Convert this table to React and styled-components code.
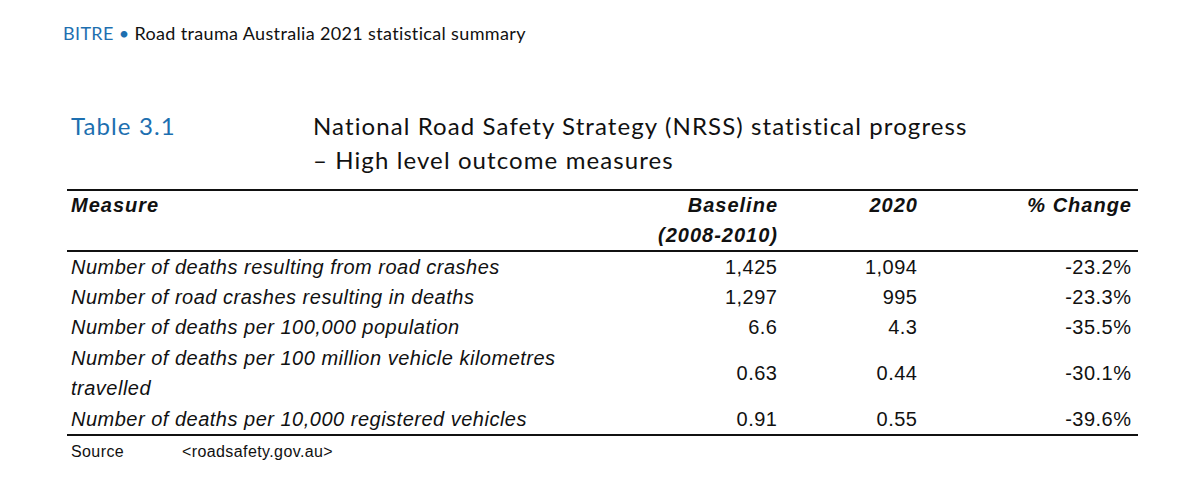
import React from 'react';
import styled, { createGlobalStyle } from 'styled-components';

const GlobalStyle = createGlobalStyle`
  html, body {
    margin: 0;
    padding: 0;
    background: #fff;
  }
`;

const Page = styled.div`
  width: 1200px;
  height: 485px;
  box-sizing: border-box;
  padding: 22px 0 0 63px;
  background: #fff;
  overflow: hidden;
`;

const RunningHead = styled.div`
  font-family: Lato, "Open Sans", sans-serif;
  font-size: 18px;
  line-height: 22px;
  letter-spacing: 0.35px;
  color: #111;
`;

const Brand = styled.span`
  color: #1d6fb0;
`;

const TitleRow = styled.div`
  display: flex;
  margin-top: 65px;
  padding-left: 8px;
  font-family: Lato, "Open Sans", sans-serif;
  font-size: 24px;
  line-height: 34px;
  letter-spacing: 1.1px;
`;

const TableNumber = styled.div`
  width: 242px;
  color: #1d6fb0;
`;

const TableTitle = styled.div`
  color: #111;
`;

const Table = styled.div`
  width: 1071px;
  margin-top: 12px;
  margin-left: 4px;
  border-top: 2px solid #111;
  border-bottom: 2px solid #111;
  font-family: "Liberation Sans", Arial, sans-serif;
  font-style: italic;
  color: #111;
`;

const Row = styled.div`
  display: grid;
  grid-template-columns: 1fr 120px 140px 214px;
  padding: ${p => (p.$tall ? '1px 7px 1px 4px' : '0 7px 0 4px')};
  margin-top: ${p => (p.$head ? '-1px' : '0')};
  align-items: center;
  font-size: 20px;
  line-height: 30px;
  letter-spacing: ${p => (p.$head ? '1px' : '0.5px')};
  border-bottom: ${p => (p.$head ? '2px solid #111' : 'none')};
  font-weight: ${p => (p.$head ? 700 : 400)};
`;

const Label = styled.div`
  max-width: ${p => (p.$wrap ? '540px' : 'none')};
  align-self: ${p => (p.$top ? 'start' : 'center')};
`;

const Num = styled.div`
  text-align: right;
  margin-right: ${p => (p.$head ? '-1px' : '-0.5px')};
  font-style: ${p => (p.$head ? 'italic' : 'normal')};
  align-self: ${p => (p.$top ? 'start' : 'center')};
`;

const Source = styled.div`
  display: flex;
  margin: 6px 0 0 8px;
  font-family: "Liberation Sans", Arial, sans-serif;
  font-size: 16px;
  line-height: 20px;
  letter-spacing: 0.4px;
  color: #111;
`;

const SourceLabel = styled.span`
  width: 111px;
`;

const rows = [
  ['Number of deaths resulting from road crashes', '1,425', '1,094', '-23.2%'],
  ['Number of road crashes resulting in deaths', '1,297', '995', '-23.3%'],
  ['Number of deaths per 100,000 population', '6.6', '4.3', '-35.5%'],
  ['Number of deaths per 100 million vehicle kilometres travelled', '0.63', '0.44', '-30.1%', true],
  ['Number of deaths per 10,000 registered vehicles', '0.91', '0.55', '-39.6%'],
];

export default function App() {
  return (
    <Page>
      <GlobalStyle />
      <RunningHead>
        <Brand>BITRE •</Brand> Road trauma Australia 2021 statistical summary
      </RunningHead>
      <TitleRow>
        <TableNumber>Table 3.1</TableNumber>
        <TableTitle>
          National Road Safety Strategy (NRSS) statistical progress
          <br />– High level outcome measures
        </TableTitle>
      </TitleRow>
      <Table>
        <Row $head>
          <Label $top>Measure</Label>
          <Num $head>Baseline<br />(2008-2010)</Num>
          <Num $head $top>2020</Num>
          <Num $head $top>% Change</Num>
        </Row>
        {rows.map(([label, base, cur, change, tall]) => (
          <Row key={label} $tall={tall}>
            <Label $wrap={tall}>{label}</Label>
            <Num>{base}</Num>
            <Num>{cur}</Num>
            <Num>{change}</Num>
          </Row>
        ))}
      </Table>
      <Source>
        <SourceLabel>Source</SourceLabel>
        <span>&lt;roadsafety.gov.au&gt;</span>
      </Source>
    </Page>
  );
}
